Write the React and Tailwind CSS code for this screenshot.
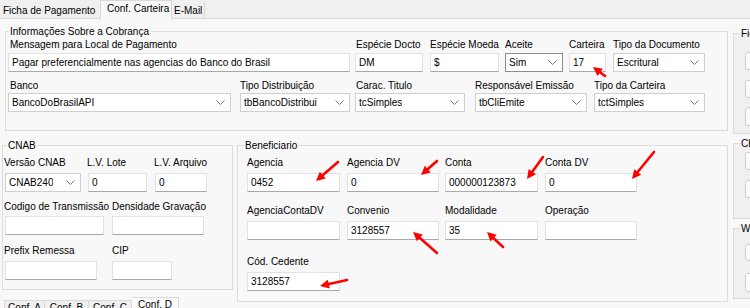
import React from "react";

function Group({ legend, className = "", legendCls = "", children }) {
  return (
    <fieldset className={`border border-[#dcdcdc] shrink-0 ${className}`}>
      <legend className={`px-[1px] h-[13px] leading-[13px] whitespace-nowrap ${legendCls}`}>{legend}</legend>
      {children}
    </fieldset>
  );
}

function Field({ label, cls = "", labelCls = "", gap = "mt-[2px]", children }) {
  return (
    <div className={`flex flex-col shrink-0 ${cls}`}>
      <div className={`h-[13px] leading-[13px] whitespace-nowrap ${labelCls}`}>{label}</div>
      <div className={gap}>{children}</div>
    </div>
  );
}

function Edit({ value = "" }) {
  return (
    <input
      readOnly
      value={value}
      className="block h-[19px] w-full bg-white border border-[#e2e2e2] border-b-[#a9a9a9] px-[3px] text-[10px] leading-[17px] outline-none"
    />
  );
}

function Combo({ value, dark = false }) {
  return (
    <div
      className={`flex items-center justify-between h-[19px] w-full bg-white border pl-[3px] pr-[5px] ${
        dark ? "border-[#8e8e8e]" : "border-[#cfcfcf]"
      }`}
    >
      <span className="whitespace-nowrap overflow-hidden">{value}</span>
      <svg width="9" height="5" viewBox="0 0 9 5" className="shrink-0">
        <polyline points="0.5,0.5 4.5,4.5 8.5,0.5" fill="none" stroke="#7c7c7c" strokeWidth="1" />
      </svg>
    </div>
  );
}

function Box({ cls }) {
  return <div className={`ml-[11px] w-[50px] bg-[#fbfbfb] border border-[#cdcdcd] rounded-[3px] ${cls}`} />;
}

const arrows = [
  [593, 67, 605, 76],
  [316, 181, 338, 162],
  [421, 175, 437, 161],
  [527, 179, 543, 157],
  [632, 179, 654, 152],
  [413, 232, 437, 253],
  [487, 232, 503, 247],
  [320, 286, 347, 280],
];

function Arrow({ hx, hy, tx, ty }) {
  const dx = tx - hx;
  const dy = ty - hy;
  const len = Math.hypot(dx, dy);
  const ux = dx / len;
  const uy = dy / len;
  const L = 9;
  const W = 4.5;
  const bx = hx + ux * L;
  const by = hy + uy * L;
  const px = -uy;
  const py = ux;
  const pts = `${hx},${hy} ${bx + px * W},${by + py * W} ${bx - px * W},${by - py * W}`;
  return (
    <g>
      <line x1={bx - ux * 1} y1={by - uy * 1} x2={tx} y2={ty} stroke="#ff0000" strokeWidth="2.6" strokeLinecap="round" />
      <polygon points={pts} fill="#ff0000" />
    </g>
  );
}

export default function App() {
  return (
    <div className="relative w-[750px] h-[308px] overflow-hidden bg-[#f0f0f0] text-[10px] leading-[13px] text-black font-['Liberation_Sans',Arial,sans-serif]">
      {/* top tabs */}
      <div className="flex items-end h-[19px] border-b border-[#d9d9d9]">
        <div className="h-[17px] w-[100px] pl-[3px] pt-[3px] whitespace-nowrap">Ficha de Pagamento</div>
        <div className="h-[19px] w-[72px] -mb-px pl-[6px] pt-[1px] bg-[#f8f8f8] border-x border-t border-[#d9d9d9] whitespace-nowrap">
          Conf. Carteira
        </div>
        <div className="h-[17px] w-[33px] pl-[2px] pt-[3px] border-r border-[#d9d9d9] whitespace-nowrap">E-Mail</div>
      </div>

      {/* page */}
      <div className="flex h-[289px] bg-[#f8f8f8]">
        <div className="w-[733px] shrink-0 flex flex-col">
          <Group
            legend="Informações Sobre a Cobrança"
            className="ml-[5px] mt-[6px] w-[723px] h-[106px]"
            legendCls="ml-[3px]"
          >
            <div className="flex">
              <Field label="Mensagem para Local de Pagamento" cls="ml-[2px] w-[342px]" labelCls="pl-[2px]">
                <Edit value="Pagar preferencialmente nas agencias do Banco do Brasil" />
              </Field>
              <Field label="Espécie Docto" cls="ml-[5px] w-[68px]" labelCls="pl-[1px]">
                <Edit value="DM" />
              </Field>
              <Field label="Espécie Moeda" cls="ml-[7px] w-[69px]">
                <Edit value="$" />
              </Field>
              <Field label="Aceite" cls="ml-[6px] w-[58px]">
                <Combo value="Sim" dark />
              </Field>
              <Field label="Carteira" cls="ml-[6px] w-[37px]">
                <Edit value="17" />
              </Field>
              <Field label="Tipo da Documento" cls="ml-[7px] w-[92px]">
                <Combo value="Escritural" />
              </Field>
            </div>
            <div className="flex mt-[7px]">
              <Field label="Banco" cls="ml-[2px] w-[223px]" labelCls="pl-[2px]" gap="mt-[1px]">
                <Combo value="BancoDoBrasilAPI" />
              </Field>
              <Field label="Tipo Distribuição" cls="ml-[9px] w-[110px]" gap="mt-[1px]">
                <Combo value="tbBancoDistribui" />
              </Field>
              <Field label="Carac. Titulo" cls="ml-[5px] w-[110px]" labelCls="pl-[1px]" gap="mt-[1px]">
                <Combo value="tcSimples" />
              </Field>
              <Field label="Responsável Emissão" cls="ml-[10px] w-[112px]" gap="mt-[1px]">
                <Combo value="tbCliEmite" />
              </Field>
              <Field label="Tipo da Carteira" cls="ml-[7px] w-[111px]" gap="mt-[1px]">
                <Combo value="tctSimples" />
              </Field>
            </div>
          </Group>

          <div className="flex mt-[8px]">
            {/* CNAB column */}
            <div className="flex flex-col ml-[2px]">
              <Group legend="CNAB" className="w-[231px] h-[151px]" legendCls="ml-[4px]">
                <div className="flex mt-[4px]">
                  <Field label="Versão CNAB" cls="ml-[2px] w-[76px]" labelCls="-ml-px" gap="mt-[4px]">
                    <Combo value="CNAB240" />
                  </Field>
                  <Field label="L.V. Lote" cls="ml-[7px] w-[59px]" labelCls="-ml-px" gap="mt-[4px]">
                    <Edit value="0" />
                  </Field>
                  <Field label="L.V. Arquivo" cls="ml-[8px] w-[52px]" labelCls="-ml-px" gap="mt-[4px]">
                    <Edit value="0" />
                  </Field>
                </div>
                <div className="flex mt-[8px]">
                  <Field label="Codigo de Transmissão" cls="ml-[2px] w-[99px]" labelCls="-ml-px" gap="mt-[3px]">
                    <Edit />
                  </Field>
                  <Field label="Densidade Gravação" cls="ml-[8px] w-[92px]" gap="mt-[3px]">
                    <Edit />
                  </Field>
                </div>
                <div className="flex mt-[9px]">
                  <Field label="Prefix Remessa" cls="ml-[2px] w-[92px]" labelCls="-ml-px" gap="mt-[4px]">
                    <Edit />
                  </Field>
                  <Field label="CIP" cls="ml-[15px] w-[60px]" gap="mt-[4px]">
                    <Edit />
                  </Field>
                </div>
              </Group>
              <div className="flex items-start mt-[7px] ml-[2px]">
                <div className="mt-[3px] w-[41px] h-[12px] border border-[#d9d9d9] bg-[#f0f0f0] text-center whitespace-nowrap">Conf. A</div>
                <div className="mt-[3px] w-[44px] h-[12px] border-y border-r border-[#d9d9d9] bg-[#f0f0f0] text-center whitespace-nowrap">Conf. B</div>
                <div className="mt-[3px] w-[43px] h-[12px] border-y border-r border-[#d9d9d9] bg-[#f0f0f0] text-center whitespace-nowrap">Conf. C</div>
                <div className="w-[47px] h-[14px] border-y border-r border-[#d9d9d9] bg-[#fbfbfb] text-center whitespace-nowrap">Conf. D</div>
              </div>
            </div>

            {/* Beneficiario */}
            <Group legend="Beneficiario" className="ml-[4px] w-[491px] h-[163px]" legendCls="ml-[6px]">
              <div className="flex mt-[4px]">
                <Field label="Agencia" cls="ml-[9px] w-[93px]" gap="mt-[4px]">
                  <Edit value="0452" />
                </Field>
                <Field label="Agencia DV" cls="ml-[7px] w-[92px]" gap="mt-[4px]">
                  <Edit value="0" />
                </Field>
                <Field label="Conta" cls="ml-[6px] w-[93px]" gap="mt-[4px]">
                  <Edit value="000000123873" />
                </Field>
                <Field label="Conta DV" cls="ml-[7px] w-[92px]" gap="mt-[4px]">
                  <Edit value="0" />
                </Field>
              </div>
              <div className="flex mt-[12px]">
                <Field label="AgenciaContaDV" cls="ml-[9px] w-[93px]" gap="mt-[4px]">
                  <Edit />
                </Field>
                <Field label="Convenio" cls="ml-[7px] w-[92px]" gap="mt-[4px]">
                  <Edit value="3128557" />
                </Field>
                <Field label="Modalidade" cls="ml-[6px] w-[93px]" gap="mt-[4px]">
                  <Edit value="35" />
                </Field>
                <Field label="Operação" cls="ml-[7px] w-[92px]" gap="mt-[4px]">
                  <Edit />
                </Field>
              </div>
              <div className="flex mt-[15px]">
                <Field label="Cód. Cedente" cls="ml-[9px] w-[93px]" gap="mt-[4px]">
                  <Edit value="3128557" />
                </Field>
              </div>
            </Group>
          </div>
        </div>

        {/* right column */}
        <div className="flex flex-col">
          <Group legend="Ficha" className="mt-[8px] w-[60px] h-[107px] bg-[#f0f0f0]" legendCls="ml-[6px]">
            <Box cls="mt-[12px] h-[18px]" />
            <Box cls="mt-[10px] h-[18px]" />
            <Box cls="mt-[9px] h-[19px]" />
          </Group>
          <Group legend="Cheque" className="mt-[3px] w-[60px] h-[82px] bg-[#f0f0f0]" legendCls="ml-[6px]">
            <Box cls="mt-[2px] h-[18px]" />
            <Box cls="mt-[10px] h-[18px]" />
          </Group>
          <Group legend="WebService" className="mt-[3px] w-[60px] h-[77px] bg-[#f0f0f0]" legendCls="ml-[6px]">
            <Box cls="mt-[9px] h-[17px]" />
            <Box cls="mt-[12px] h-[19px]" />
          </Group>
        </div>
      </div>

      {/* red annotation arrows */}
      <svg className="absolute inset-0 pointer-events-none" width="750" height="308" viewBox="0 0 750 308">
        {arrows.map(([hx, hy, tx, ty], i) => (
          <Arrow key={i} hx={hx} hy={hy} tx={tx} ty={ty} />
        ))}
      </svg>
    </div>
  );
}
